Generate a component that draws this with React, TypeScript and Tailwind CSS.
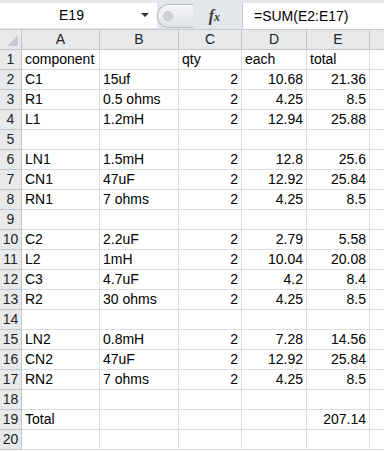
const cols = ["A", "B", "C", "D", "E"]
const widths = ["w-[78px]", "w-[79px]", "w-[63px]", "w-[65px]", "w-[63px]"]

const rows: string[][] = [
    ["component", "", "qty", "each", "total"],
    ["C1", "15uf", "2", "10.68", "21.36"],
    ["R1", "0.5 ohms", "2", "4.25", "8.5"],
    ["L1", "1.2mH", "2", "12.94", "25.88"],
    ["", "", "", "", ""],
    ["LN1", "1.5mH", "2", "12.8", "25.6"],
    ["CN1", "47uF", "2", "12.92", "25.84"],
    ["RN1", "7 ohms", "2", "4.25", "8.5"],
    ["", "", "", "", ""],
    ["C2", "2.2uF", "2", "2.79", "5.58"],
    ["L2", "1mH", "2", "10.04", "20.08"],
    ["C3", "4.7uF", "2", "4.2", "8.4"],
    ["R2", "30 ohms", "2", "4.25", "8.5"],
    ["", "", "", "", ""],
    ["LN2", "0.8mH", "2", "7.28", "14.56"],
    ["CN2", "47uF", "2", "12.92", "25.84"],
    ["RN2", "7 ohms", "2", "4.25", "8.5"],
    ["", "", "", "", ""],
    ["Total", "", "", "", "207.14"],
    ["", "", "", "", ""],
]

const isNum = (v: string) => v !== "" && !isNaN(Number(v))

function FormulaBar() {
    return (
        <div className="h-[30px] bg-[#e3e6eb] border-b border-[#c6c9ce] flex pt-[3px]">
            <div className="w-[157px] h-[25px] bg-white relative flex items-center justify-center">
                <span className="text-[14px] text-black pr-[14px]">E19</span>
                <span className="absolute right-[8px] top-[10px] w-0 h-0 border-l-[4px] border-r-[4px] border-t-[4px] border-l-transparent border-r-transparent border-t-[#333]" />
            </div>
            <div className="w-[85px] h-[25px] flex items-center">
                <div className="h-[24px] w-[36px] rounded-l-full border border-r-0 border-[#b9bcc1] bg-gradient-to-b from-[#f6f7f9] to-[#dfe2e6] flex items-center pl-[5px]">
                    <span className="w-[10px] h-[10px] rounded-full bg-[#cfd2d6] border border-[#c0c3c7]" />
                </div>
                <span className="ml-auto mr-[22px] text-[16px] italic text-[#3a3a3a] font-['Liberation_Serif',serif] font-bold">
                    f<span className="text-[12px]">x</span>
                </span>
            </div>
            <div className="flex-1 h-[26px] bg-white border-l border-[#c6c9ce] flex items-center pl-[11px]">
                <span className="text-[14px] text-black">=SUM(E2:E17)</span>
            </div>
        </div>
    )
}

export default function App() {
    return (
        <div className="w-[384px] h-[452px] bg-white overflow-hidden font-['Liberation_Sans',Arial,sans-serif]">
            <FormulaBar />
            <div className="flex h-[20px] bg-[#e8e9eb] border-b border-[#c3c5c8]">
                <div className="w-[22px] border-r border-[#c3c5c8] relative">
                    <span className="absolute right-[3px] bottom-[3px] w-0 h-0" style={{ borderBottom: "11px solid #c9cbce", borderLeft: "11px solid transparent" }} />
                </div>
                {cols.map((c, i) => (
                    <div key={c} className={`${widths[i]} border-r border-[#c3c5c8] flex items-center justify-center text-[14px] text-[#222]`}>
                        {c}
                    </div>
                ))}
                <div className="flex-1" />
            </div>
            {rows.map((r, ri) => (
                <div key={ri} className="flex h-[20px] border-b border-[#dadcdd]">
                    <div className="w-[22px] bg-[#e8e9eb] border-r border-[#c3c5c8] border-b border-b-[#c3c5c8] -mb-px flex items-center justify-center text-[14px] text-[#222]">
                        {ri + 1}
                    </div>
                    {r.map((v, ci) => (
                        <div
                            key={ci}
                            className={`${widths[ci]} border-r border-[#dadcdd] flex items-center text-[14px] text-black whitespace-nowrap ${isNum(v) ? "justify-end pr-[3px]" : "pl-[3px]"}`}
                        >
                            {v}
                        </div>
                    ))}
                    <div className="flex-1" />
                </div>
            ))}
        </div>
    )
}
